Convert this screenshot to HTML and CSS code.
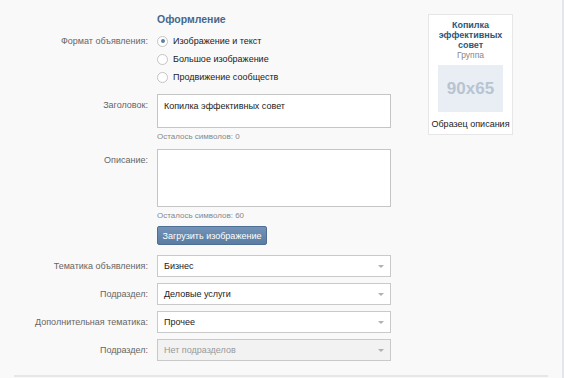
FILE: index.html
```html
<!DOCTYPE html>
<html lang="ru">
<head>
    <meta charset="UTF-8">
    <title>Оформление объявления</title>
    <link rel="stylesheet" href="styles.css">
</head>
<body>
<div class="page">
    <div class="layout">
        <!-- Форма -->
        <div class="form">
            <div class="row">
                <div class="label"></div>
                <div class="field"><h2 class="title">Оформление</h2></div>
            </div>

            <div class="row">
                <div class="label label-radio">Формат объявления:</div>
                <div class="field">
                    <div class="radio checked"><span class="radio-icon"></span>Изображение и текст</div>
                    <div class="radio"><span class="radio-icon"></span>Большое изображение</div>
                    <div class="radio"><span class="radio-icon"></span>Продвижение сообществ</div>
                </div>
            </div>

            <div class="row row-text">
                <div class="label label-box">Заголовок:</div>
                <div class="field">
                    <div class="box box-title">Копилка эффективных совет</div>
                    <div class="hint hint-title">Осталось символов: 0</div>
                </div>
            </div>

            <div class="row row-text">
                <div class="label label-box">Описание:</div>
                <div class="field">
                    <div class="box box-desc"></div>
                    <div class="hint hint-desc">Осталось символов: 60</div>
                    <button class="btn">Загрузить изображение</button>
                </div>
            </div>

            <div class="selects">
                <div class="row row-select">
                    <div class="label">Тематика объявления:</div>
                    <div class="field"><div class="select">Бизнес<span class="arrow"></span></div></div>
                </div>
                <div class="row row-select">
                    <div class="label">Подраздел:</div>
                    <div class="field"><div class="select">Деловые услуги<span class="arrow"></span></div></div>
                </div>
                <div class="row row-select">
                    <div class="label">Дополнительная тематика:</div>
                    <div class="field"><div class="select">Прочее<span class="arrow"></span></div></div>
                </div>
                <div class="row row-select">
                    <div class="label">Подраздел:</div>
                    <div class="field"><div class="select disabled">Нет подразделов<span class="arrow"></span></div></div>
                </div>
            </div>
        </div>

        <!-- Превью -->
        <div class="preview">
            <div class="preview-name">Копилка эффективных совет</div>
            <div class="preview-type">Группа</div>
            <div class="preview-img">90x65</div>
            <div class="preview-desc">Образец описания</div>
        </div>
    </div>
    <div class="footer-line"></div>
</div>
</body>
</html>
```

FILE: styles.css
```css
body {
    margin: 0;
    background-color: #f9f9f9;
    font-family: "Liberation Sans", Arial, sans-serif;
    font-size: 9px;
    color: #000;
}
.page {
    width: 564px;
    height: 378px;
    box-sizing: border-box;
    border-right: 2px solid #e3e7ec;
    padding-top: 10px;
    overflow: hidden;
}
.layout {
    display: flex;
    align-items: flex-start;
}
.form {
    width: 391px;
}
.row {
    display: flex;
    align-items: flex-start;
}
.label {
    width: 148px;
    padding-right: 9px;
    text-align: right;
    color: #666;
    flex-shrink: 0;
}
.field {
    width: 234px;
}
.title {
    margin: 0 0 4px 0;
    font-size: 10.5px;
    line-height: 18px;
    font-weight: bold;
    color: #45688e;
}
.label-radio {
    line-height: 18px;
}
.radio {
    display: flex;
    align-items: center;
    height: 18px;
    color: #222;
}
.radio-icon {
    width: 11px;
    height: 11px;
    box-sizing: border-box;
    border: 1px solid #c4c4c4;
    border-radius: 50%;
    background-color: #fff;
    margin-right: 5px;
    position: relative;
}
.radio.checked .radio-icon::after {
    content: "";
    position: absolute;
    left: 2.5px;
    top: 2.5px;
    width: 4px;
    height: 4px;
    border-radius: 50%;
    background-color: #5b7fa6;
}
.row-text {
    margin-top: 8px;
}
.row-text + .row-text {
    margin-top: 5px;
}
.label-box {
    line-height: 18px;
    padding-top: 2px;
}
.box {
    box-sizing: border-box;
    border: 1px solid #c5c5c5;
    background-color: #fff;
    padding: 5px 6px;
    line-height: 12px;
    color: #222;
}
.box-title {
    height: 34px;
}
.box-desc {
    height: 58px;
}
.hint {
    color: #888;
    font-size: 8px;
    line-height: 14px;
}
.hint-title {
    margin-top: 2px;
}
.hint-desc {
    margin-top: 2px;
}
.btn {
    display: block;
    margin-top: 3px;
    width: 110px;
    height: 19px;
    padding: 0;
    border: 1px solid #4d6f95;
    border-radius: 2px;
    background: linear-gradient(#7393b7, #5a7ca2);
    color: #fff;
    font-family: "Liberation Sans", Arial, sans-serif;
    font-size: 9px;
    cursor: pointer;
}
.selects {
    margin-top: 10px;
    display: flex;
    flex-direction: column;
    gap: 6px;
}
.row-select {
    align-items: center;
}
.select {
    position: relative;
    box-sizing: border-box;
    height: 22px;
    border: 1px solid #c9c9c9;
    background-color: #fff;
    padding-left: 6px;
    line-height: 20px;
    color: #222;
}
.select.disabled {
    background-color: #f2f2f2;
    color: #999;
}
.arrow {
    position: absolute;
    right: 6px;
    top: 9px;
    width: 0;
    height: 0;
    border-left: 3.5px solid transparent;
    border-right: 3.5px solid transparent;
    border-top: 3px solid #b0b0b0;
}
.preview {
    margin-left: 37px;
    margin-top: 4px;
    width: 85px;
    height: 121px;
    box-sizing: border-box;
    border: 1px solid #e6e6e6;
    background-color: #fff;
    padding-top: 5px;
    text-align: center;
}
.preview-name {
    font-weight: bold;
    font-size: 9px;
    line-height: 10px;
    color: #2b587a;
    padding: 0 5px;
}
.preview-type {
    color: #888;
    font-size: 8.5px;
    line-height: 10px;
}
.preview-img {
    width: 65px;
    height: 47px;
    margin: 5px auto 0;
    background-color: #e9eef4;
    color: #b7c4d2;
    font-size: 17px;
    font-weight: bold;
    line-height: 47px;
}
.preview-desc {
    margin-top: 7px;
    font-size: 9px;
    line-height: 10px;
    color: #222;
}
.footer-line {
    margin: 14px 0 0 14px;
    width: 534px;
    height: 2px;
    background-color: #e6e6e6;
}
```
